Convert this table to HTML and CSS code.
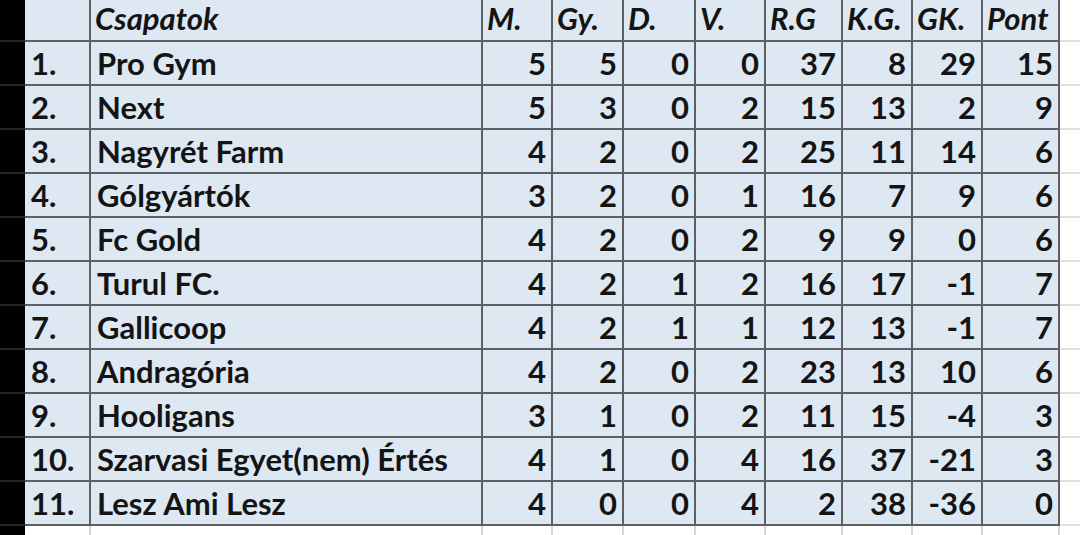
FILE: index.html
```html
<!DOCTYPE html>
<html lang="hu">
<head>
<meta charset="utf-8">
<title>Tabella</title>
<link rel="stylesheet" href="styles.css">
</head>
<body>
<div class="sheet">
  <div class="row head">
    <div class="edge"></div>
    <div class="c"></div>
    <div class="c">Csapatok</div>
    <div class="c">M.</div>
    <div class="c">Gy.</div>
    <div class="c">D.</div>
    <div class="c">V.</div>
    <div class="c">R.G</div>
    <div class="c">K.G.</div>
    <div class="c">GK.</div>
    <div class="c">Pont</div>
    <div class="out"></div>
  </div>
  <div class="row"><div class="edge"></div><div class="c">1.</div><div class="c">Pro Gym</div><div class="c n">5</div><div class="c n">5</div><div class="c n">0</div><div class="c n">0</div><div class="c n">37</div><div class="c n">8</div><div class="c n">29</div><div class="c n">15</div><div class="out"></div></div>
  <div class="row"><div class="edge"></div><div class="c">2.</div><div class="c">Next</div><div class="c n">5</div><div class="c n">3</div><div class="c n">0</div><div class="c n">2</div><div class="c n">15</div><div class="c n">13</div><div class="c n">2</div><div class="c n">9</div><div class="out"></div></div>
  <div class="row"><div class="edge"></div><div class="c">3.</div><div class="c">Nagyrét Farm</div><div class="c n">4</div><div class="c n">2</div><div class="c n">0</div><div class="c n">2</div><div class="c n">25</div><div class="c n">11</div><div class="c n">14</div><div class="c n">6</div><div class="out"></div></div>
  <div class="row"><div class="edge"></div><div class="c">4.</div><div class="c">Gólgyártók</div><div class="c n">3</div><div class="c n">2</div><div class="c n">0</div><div class="c n">1</div><div class="c n">16</div><div class="c n">7</div><div class="c n">9</div><div class="c n">6</div><div class="out"></div></div>
  <div class="row"><div class="edge"></div><div class="c">5.</div><div class="c">Fc Gold</div><div class="c n">4</div><div class="c n">2</div><div class="c n">0</div><div class="c n">2</div><div class="c n">9</div><div class="c n">9</div><div class="c n">0</div><div class="c n">6</div><div class="out"></div></div>
  <div class="row"><div class="edge"></div><div class="c">6.</div><div class="c">Turul FC.</div><div class="c n">4</div><div class="c n">2</div><div class="c n">1</div><div class="c n">2</div><div class="c n">16</div><div class="c n">17</div><div class="c n">-1</div><div class="c n">7</div><div class="out"></div></div>
  <div class="row"><div class="edge"></div><div class="c">7.</div><div class="c">Gallicoop</div><div class="c n">4</div><div class="c n">2</div><div class="c n">1</div><div class="c n">1</div><div class="c n">12</div><div class="c n">13</div><div class="c n">-1</div><div class="c n">7</div><div class="out"></div></div>
  <div class="row"><div class="edge"></div><div class="c">8.</div><div class="c">Andragória</div><div class="c n">4</div><div class="c n">2</div><div class="c n">0</div><div class="c n">2</div><div class="c n">23</div><div class="c n">13</div><div class="c n">10</div><div class="c n">6</div><div class="out"></div></div>
  <div class="row"><div class="edge"></div><div class="c">9.</div><div class="c">Hooligans</div><div class="c n">3</div><div class="c n">1</div><div class="c n">0</div><div class="c n">2</div><div class="c n">11</div><div class="c n">15</div><div class="c n">-4</div><div class="c n">3</div><div class="out"></div></div>
  <div class="row"><div class="edge"></div><div class="c">10.</div><div class="c">Szarvasi Egyet(nem) Értés</div><div class="c n">4</div><div class="c n">1</div><div class="c n">0</div><div class="c n">4</div><div class="c n">16</div><div class="c n">37</div><div class="c n">-21</div><div class="c n">3</div><div class="out"></div></div>
  <div class="row"><div class="edge"></div><div class="c">11.</div><div class="c">Lesz Ami Lesz</div><div class="c n">4</div><div class="c n">0</div><div class="c n">0</div><div class="c n">4</div><div class="c n">2</div><div class="c n">38</div><div class="c n">-36</div><div class="c n">0</div><div class="out"></div></div>
  <div class="row empty"><div class="edge"></div><div class="e"></div><div class="e"></div><div class="e"></div><div class="e"></div><div class="e"></div><div class="e"></div><div class="e"></div><div class="e"></div><div class="e"></div><div class="e"></div><div class="out"></div></div>
</div>
</body>
</html>
```
FILE: styles.css
```css
html, body {
  margin: 0;
  padding: 0;
  background: #ffffff;
}
body {
  width: 1080px;
  height: 535px;
  overflow: hidden;
  font-family: Lato, "Open Sans", sans-serif;
  font-weight: 700;
  font-size: 31px;
  color: #141414;
}
.sheet {
  display: flex;
  flex-direction: column;
}
.row {
  display: grid;
  grid-template-columns: 25px 66px 392px 70px 71px 72px 70px 77px 70px 70px 77px 1fr;
  height: 44px;
}
.row.head {
  height: 42px;
}
.row.empty {
  height: 20px;
}
.edge {
  background: #000;
  border-bottom: 2px solid #262626;
}
.c {
  background: #dde8f3;
  border-right: 2px solid #5c5f63;
  border-bottom: 2px solid #5c5f63;
  padding: 0 5px 5px 6px;
  display: flex;
  align-items: flex-end;
  white-space: nowrap;
  line-height: 1;
}
.head .c {
  font-style: italic;
  padding-bottom: 6px;
  padding-left: 4px;
}
.c.n {
  justify-content: flex-end;
}
.e {
  border-right: 2px solid #d6d6d6;
}
.out {
  border-bottom: 2px solid #e0e0e0;
}
.empty .out {
  border-bottom: none;
}
.empty .edge {
  border-bottom: none;
}
```
